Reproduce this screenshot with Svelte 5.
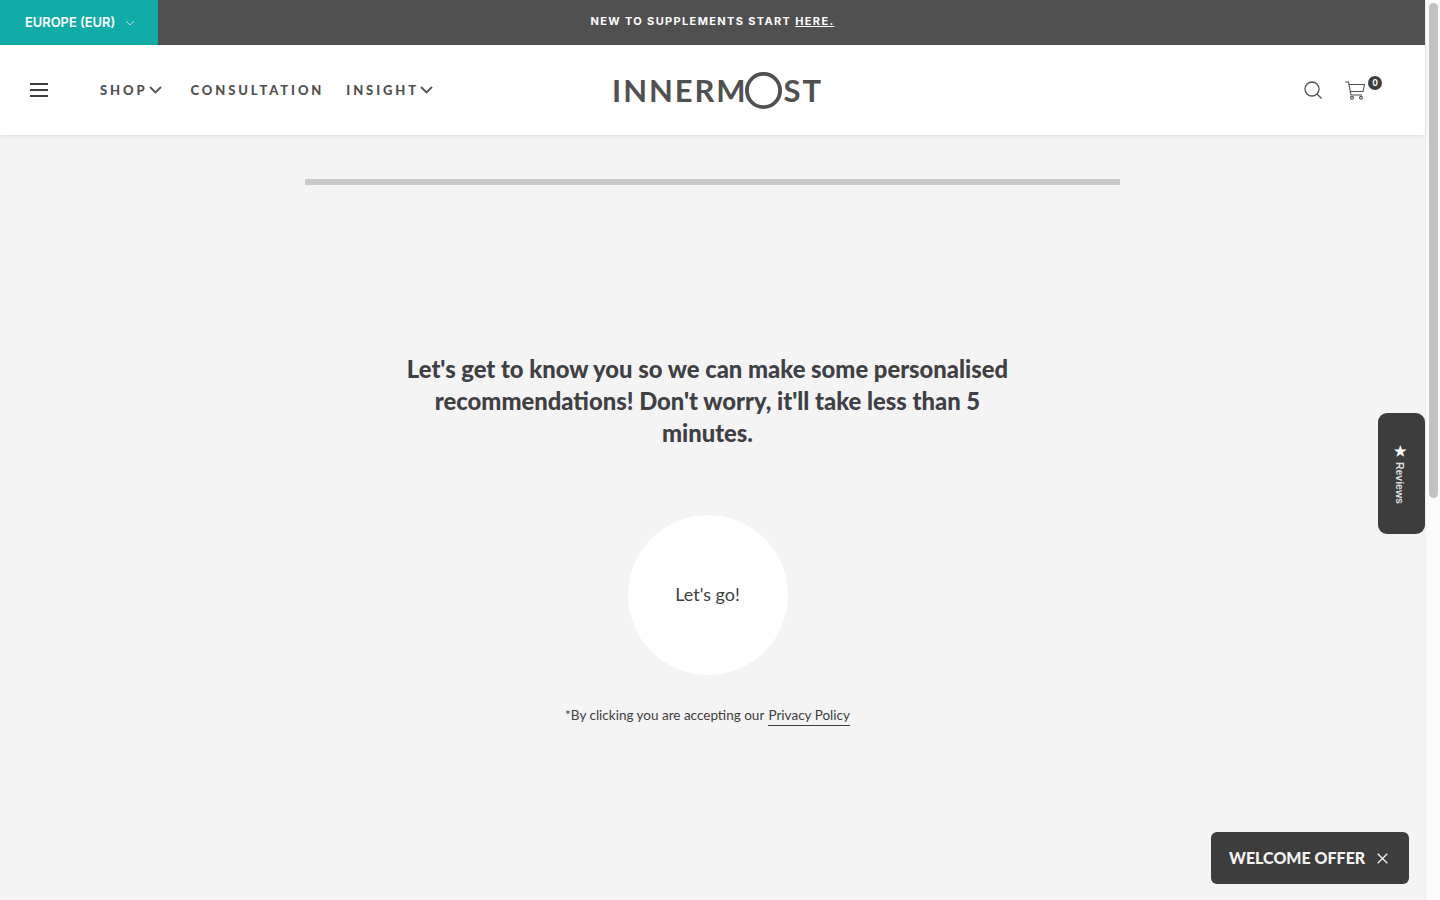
<script>
  const nav = [
    { label: 'SHOP', caret: true },
    { label: 'CONSULTATION', caret: false },
    { label: 'INSIGHT', caret: true }
  ];
</script>

<div class="page">
  <div class="main">
    <div class="announce">
      <button class="region">EUROPE (EUR)
        <svg width="10" height="6" viewBox="0 0 10 6"><path d="M1 1l4 4 4-4" fill="none" stroke="#c4d8d6" stroke-width="1"/></svg>
      </button>
      <div class="announce-text">NEW TO SUPPLEMENTS START <a href="#here">HERE.</a></div>
    </div>

    <header class="header">
      <div class="header-left">
        <button class="burger" aria-label="Menu"><span></span><span></span><span></span></button>
        <nav class="nav">
          {#each nav as item}
            <a href="#nav" class="nav-item">
              {item.label}
              {#if item.caret}
                <svg width="13" height="8" viewBox="0 0 13 8"><path d="M1 1l5.500 5.500L12 1" fill="none" stroke="#555" stroke-width="1.800"/></svg>
              {/if}
            </a>
          {/each}
        </nav>
      </div>
      <div class="logo">INNERM<svg class="logo-o" width="37" height="37" viewBox="0 0 37 37"><circle cx="18.500" cy="18.500" r="16.600" fill="none" stroke="#505050" stroke-width="3.800"/></svg>ST</div>
      <div class="header-right">
        <svg width="18" height="18" viewBox="0 0 18 18" fill="none" stroke="#505050" stroke-width="1.300"><circle cx="8" cy="8" r="7"/><path d="M13 13l4.500 4.500"/></svg>
        <div class="cart">
          <svg width="20" height="19" viewBox="0 0 20 19" fill="none" stroke="#505050" stroke-width="1.100"><path d="M0 1h3.500l2.500 13h11"/><path d="M4 3.500h15.500l-1.500 7H5.500" /><circle cx="7" cy="16.800" r="1.400"/><circle cx="16" cy="16.800" r="1.400"/></svg>
          <span class="badge">0</span>
        </div>
      </div>
    </header>

    <main class="content">
      <div class="progress"></div>
      <h1>Let's get to know you so we can make some personalised recommendations! Don't worry, it'll take less than 5 minutes.</h1>
      <button class="go">Let's go!</button>
      <p class="legal">*By clicking you are accepting our <a href="#privacy">Privacy Policy</a></p>
    </main>

    <button class="reviews"><span><b>★</b> Reviews</span></button>
    <div class="offer">
      <span>WELCOME OFFER</span>
      <svg width="11" height="11" viewBox="0 0 11 11"><path d="M.7.7l9.600 9.600M10.300.7L.7 10.300" fill="none" stroke="#f3f3f3" stroke-width="1.300"/></svg>
    </div>
  </div>
  <div class="scrollbar"><div class="thumb"></div></div>
</div>

<style>
  :global(body) {
    margin: 0;
    background: #f4f4f4;
  }

  .page {
    display: flex;
    height: 900px;
    overflow: hidden;
    font-family: Lato, sans-serif;
    color: #3e3e3e;
  }

  .main {
    flex: 1;
    min-width: 0;
    position: relative;
    display: flex;
    flex-direction: column;
  }

  .announce {
    display: flex;
    height: 45px;
    background: #505050;
    color: #fff;
  }

  .region {
    width: 158px;
    display: flex;
    align-items: center;
    gap: 10px;
    padding: 0 0 0 25px;
    border: none;
    background: #12aca8;
    color: #fff;
    font-family: Inter, sans-serif;
    font-size: 12.900px;
    font-weight: 600;
  }

  .announce-text {
    flex: 1;
    padding-right: 158px;
    text-align: center;
    line-height: 42px;
    font-family: Inter, sans-serif;
    font-size: 11px;
    font-weight: 700;
    letter-spacing: 1.350px;
  }

  .announce-text a {
    color: #fff;
  }

  .header {
    height: 90px;
    display: grid;
    grid-template-columns: 1fr auto 1fr;
    align-items: center;
    background: #fff;
    box-shadow: 0 1px 4px rgba(0, 0, 0, 0.1);
    position: relative;
  }

  .header-left {
    display: flex;
    align-items: center;
    padding-left: 30px;
  }

  .burger {
    width: 18px;
    height: 14px;
    padding: 0;
    border: none;
    background: none;
    display: flex;
    flex-direction: column;
    justify-content: space-between;
  }

  .burger span {
    height: 2px;
    background: #3e3e3e;
  }

  .nav {
    display: flex;
    gap: 22px;
    margin-left: 52px;
  }

  .nav-item {
    display: flex;
    align-items: center;
    color: #505050;
    text-decoration: none;
    font-size: 13px;
    font-weight: 900;
    letter-spacing: 2.900px;
  }

  .nav-item svg {
    margin: 0 7px 0 1px;
  }

  .logo {
    display: flex;
    align-items: center;
    margin-left: 10px;
    color: #505050;
    font-size: 31px;
    font-weight: 700;
    letter-spacing: 1.900px;
    line-height: 1;
  }

  .logo-o {
    margin: 0 2px 0 -3px;
  }

  .header-right {
    display: flex;
    justify-content: flex-end;
    align-items: center;
    gap: 23px;
    padding-right: 60px;
  }

  .cart {
    position: relative;
    height: 19px;
  }

  .badge {
    position: absolute;
    left: 23px;
    top: -5px;
    width: 14px;
    height: 14px;
    border-radius: 50%;
    background: #3e3e3e;
    color: #fff;
    font-size: 9px;
    font-weight: 900;
    line-height: 14px;
    text-align: center;
  }

  .content {
    flex: 1;
    display: flex;
    flex-direction: column;
    align-items: center;
    padding-top: 44px;
    padding-right: 10px;
  }

  .progress {
    width: 815px;
    height: 6px;
    background: #c9c9c9;
    margin-left: 10px;
  }

  h1 {
    width: 620px;
    margin: 168px 0 0;
    text-align: center;
    font-size: 23.800px;
    font-weight: 900;
    line-height: 32px;
    color: #3e4044;
  }

  .go {
    width: 160px;
    height: 160px;
    margin-top: 66px;
    padding: 0 0 2px;
    border: none;
    border-radius: 50%;
    background: #fff;
    color: #3e3e3e;
    font-family: Lato, sans-serif;
    font-size: 18px;
  }

  .legal {
    margin: 30px 0 0;
    font-size: 13.500px;
    line-height: 20px;
  }

  .legal a {
    margin-left: 1px;
    color: #3e3e3e;
    text-decoration: none;
    border-bottom: 1px solid #3e3e3e;
    padding-bottom: 2px;
  }

  .reviews {
    position: absolute;
    right: 0;
    top: 413px;
    width: 47px;
    height: 121px;
    padding: 0 3px 0 0;
    border: none;
    border-radius: 9px;
    background: #3d3d3d;
    display: flex;
    align-items: center;
    justify-content: center;
  }

  .reviews span {
    writing-mode: vertical-rl;
    color: #dedede;
    font-family: "Liberation Sans", sans-serif;
    font-size: 10.500px;
    font-weight: 700;
  }

  .reviews b {
    color: #fff;
    font-size: 14px;
  }

  .offer {
    position: absolute;
    right: 16px;
    bottom: 16px;
    width: 198px;
    height: 52px;
    box-sizing: border-box;
    padding: 0 21px 0 18px;
    display: flex;
    align-items: center;
    justify-content: space-between;
    border-radius: 6px;
    background: #3d3d3d;
    color: #f3f3f3;
    font-size: 16px;
    font-weight: 900;
    white-space: nowrap;
  }

  .offer span {
    margin-bottom: 2px;
  }

  .scrollbar {
    width: 15px;
    flex: none;
    background: #fbfbfb;
    border-left: 1px solid #ececec;
    box-sizing: border-box;
    padding: 3px 2px 0 3px;
  }

  .thumb {
    height: 495px;
    border-radius: 5px;
    background: #c2c2c2;
  }
</style>
